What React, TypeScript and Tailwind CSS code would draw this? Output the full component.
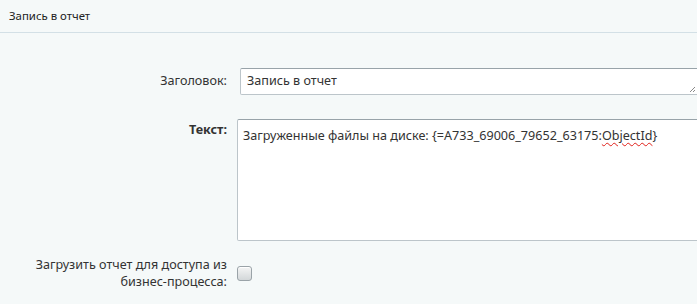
import React from 'react';

export default function App() {
  return (
    <div className="h-[304px] w-[697px] overflow-hidden bg-[#f5f9f9] font-['Noto_Sans',sans-serif] text-[12.6px] text-[#333]">
      {/* Header */}
      <div className="flex h-[33px] items-center border-b border-[#d3e0e6] px-[9px] text-[11.4px] text-[#222]">
        Запись в отчет
      </div>

      <div className="grid grid-cols-[227px_1fr] gap-x-[10px] pt-[35px]">
        {/* Заголовок */}
        <div className="flex items-center justify-end">Заголовок:</div>
        <div className="relative ml-[3px] flex h-[27px] w-[460px] items-center rounded-[2px] border border-[#bcc5ca] border-t-[#98a3a9] bg-white px-[6px]">
          Запись в отчет
          <svg className="absolute bottom-[1px] right-[3px]" width="7" height="7" viewBox="0 0 7 7">
            <path d="M6 1L1 6M6 4L4 6" stroke="#8a8a8a" strokeWidth="1" />
          </svg>
        </div>

        {/* Текст */}
        <div className="mt-[24px] flex justify-end pt-[2px] font-bold">Текст:</div>
        <div className="mt-[24px] h-[122px] w-[462px] rounded-[2px] border border-[#bcc5ca] border-t-[#98a3a9] bg-white px-[5px] pt-[7px] leading-[17px]">
          Загруженные файлы на диске: {'{'}=A733_69006_79652_63175:
          <span className="underline decoration-[#e0201a] decoration-wavy decoration-1 underline-offset-[2px]">ObjectId</span>
          {'}'}
        </div>

        {/* Checkbox */}
        <div className="mt-[15px] text-right leading-[17px]">
          Загрузить отчет для доступа из
          <br />
          бизнес-процесса:
        </div>
        <div className="mt-[15px] flex items-center">
          <div className="h-[15px] w-[15px] rounded-[3px] border border-[#9aa3a8] bg-gradient-to-b from-[#f4f5f5] to-[#d3d7d9] shadow-[inset_0_1px_0_#fff]" />
        </div>
      </div>
    </div>
  );
}
